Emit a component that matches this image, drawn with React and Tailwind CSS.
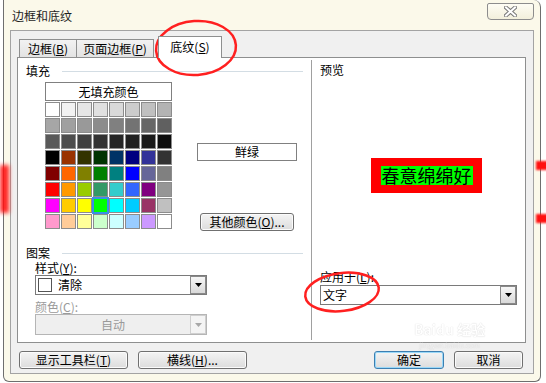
import React from 'react';

const PALETTE = [
  ['#ffffff', '#f2f2f2', '#e6e6e6', '#e0e0e0', '#d9d9d9', '#cccccc', '#c0c0c0', '#b3b3b3'],
  ['#a6a6a6', '#a0a0a0', '#999999', '#8c8c8c', '#808080', '#737373', '#666666', '#606060'],
  ['#595959', '#4d4d4d', '#404040', '#333333', '#262626', '#202020', '#1a1a1a', '#0d0d0d'],
  ['#000000', '#993300', '#333300', '#003300', '#003366', '#000080', '#333399', '#333333'],
  ['#800000', '#ff6600', '#808000', '#008000', '#008080', '#0000ff', '#666699', '#808080'],
  ['#ff0000', '#ff9900', '#99cc00', '#339966', '#33cccc', '#3366ff', '#800080', '#969696'],
  ['#ff00ff', '#ffcc00', '#ffff00', '#00ff00', '#00ffff', '#00ccff', '#993366', '#c0c0c0'],
  ['#ff99cc', '#ffcc99', '#ffff99', '#ccffcc', '#ccffff', '#99ccff', '#cc99ff', '#ffffff'],
];

const Acc = ({ c }) => <span className="underline underline-offset-1">{c}</span>;

const Arrow = ({ disabled }) => (
  <div
    className={
      disabled
        ? 'w-[16px] h-full flex items-center justify-center border border-[#cfcfcf] bg-[#f4f4f4]'
        : 'w-[16px] h-full flex items-center justify-center border border-[#8a8a8a] bg-gradient-to-b from-[#f6f6f6] to-[#d9d9d9]'
    }
  >
    <svg width="7" height="4" viewBox="0 0 7 4">
      <path d="M0 0h7L3.5 4z" fill={disabled ? '#a8a8a8' : '#000'} />
    </svg>
  </div>
);

const Button = ({ className, children, primary }) => (
  <div
    className={
      primary
        ? `h-[18px] flex items-center justify-center rounded-[3px] border border-[#3c7fb1] bg-gradient-to-b from-[#f4f4f4] to-[#dcdcdc] shadow-[inset_0_0_0_1px_#9ad8f8] ${className}`
        : `h-[18px] flex items-center justify-center rounded-[3px] border border-[#707070] bg-gradient-to-b from-[#f4f4f4] to-[#dcdcdc] shadow-[inset_0_0_0_1px_#fbfbfb] ${className}`
    }
  >
    {children}
  </div>
);

const Section = ({ title, className }) => (
  <div className={`flex items-center h-[14px] pl-[8px] pr-[8px] ${className}`}>
    <span>{title}</span>
    <div className="flex-1 h-px bg-[#d3dde4] ml-[12px]" />
  </div>
);

export default function App() {
  return (
    <div className="relative w-[546px] h-[383px] overflow-hidden bg-white pl-[3px] text-[12px] leading-[14px] text-black [font-family:'Noto_Sans_CJK_SC','Noto_Sans',sans-serif]">
      {/* window */}
      <div className="w-[538px] h-[382px] flex flex-col border-l border-r border-b border-[#6e6e6e] rounded-tr-[7px] rounded-b-[6px] bg-[#fbf9ea]">
        {/* title bar */}
        <div className="h-[30px] flex items-start justify-between pl-[8px] pr-[6px]">
          <span className="mt-[9px] text-[#1e1e1e]">边框和底纹</span>
          <div className="mt-[3px] w-[47px] h-[17px] rounded-b-[4px] rounded-t-[2px] border border-[#8d8d8d] bg-gradient-to-b from-[#fefdf4] to-[#f3f0dc] flex items-center justify-center">
            <svg width="13" height="11" viewBox="0 0 13 11">
              <path d="M2 1.5L11 9.5M11 1.5L2 9.5" stroke="#7a7a7a" strokeWidth="4" strokeLinecap="square" />
              <path d="M2 1.5L11 9.5M11 1.5L2 9.5" stroke="#ffffff" strokeWidth="2" strokeLinecap="square" />
            </svg>
          </div>
        </div>

        {/* dialog body */}
        <div className="mx-[6px] h-[344px] flex flex-col border border-[#a3a3a3] bg-[#f0f0f0] pl-[6px] pr-[7px] pt-[5px]">
          {/* tabs */}
          <div className="flex items-end h-[21px] ml-[2px]">
            <div className="w-[58px] h-[18px] flex items-center justify-center border border-b-0 border-[#8e8f8f] bg-gradient-to-b from-[#f2f2f2] to-[#e3e3e3]">
              边框(<Acc c="B" />)
            </div>
            <div className="w-[77px] h-[18px] flex items-center justify-center border border-l-0 border-b-0 border-[#8e8f8f] bg-gradient-to-b from-[#f2f2f2] to-[#e3e3e3]">
              页面边框(<Acc c="P" />)
            </div>
            <div className="relative z-10 ml-[4px] -mb-px w-[64px] h-[22px] flex items-center justify-center pb-[2px] border border-b-0 border-[#8e8f8f] bg-white">
              底纹(<Acc c="S" />)
            </div>
          </div>

          {/* tab panel */}
          <div className="h-[286px] flex border border-[#8e8f8f] bg-white">
            {/* left column */}
            <div className="w-[293px] flex flex-col">
              <Section title="填充" className="mt-[6px]" />
              <div className="flex mt-[4px] pl-[27px]">
                <div className="flex flex-col">
                  <div className="w-[127px] h-[19px] mb-px flex items-center justify-center border border-[#808080] bg-white">
                    无填充颜色
                  </div>
                  <div className="grid grid-cols-8 gap-px">
                    {PALETTE.flat().map((c, i) =>
                      i === 51 ? (
                        <div
                          key={i}
                          className="w-[15px] h-[15px] border border-[#3a8ee6] outline outline-1 outline-[#3a8ee6]"
                          style={{ backgroundColor: c }}
                        />
                      ) : (
                        <div key={i} className="w-[15px] h-[15px] border border-[#8c8c8c]" style={{ backgroundColor: c }} />
                      )
                    )}
                  </div>
                </div>
                <div className="flex flex-col pt-[61px] ml-[25px]">
                  <div className="w-[100px] h-[18px] flex items-center justify-center border border-[#808080] bg-white">
                    鲜绿
                  </div>
                  <Button className="mt-[52px] ml-[3px] w-[94px]">
                    其他颜色(<Acc c="O" />)...
                  </Button>
                </div>
              </div>

              <Section title="图案" className="mt-[15px]" />
              <div className="flex flex-col pl-[17px]">
                <span className="mt-px h-[14px]">
                  样式(<Acc c="Y" />):
                </span>
                <div className="w-[172px] h-[20px] flex items-stretch border border-[#7a7a7a] bg-white">
                  <div className="flex-1 flex items-center pl-[2px]">
                    <div className="w-[14px] h-[14px] border border-[#555]" />
                    <span className="ml-[6px]">清除</span>
                  </div>
                  <Arrow />
                </div>
                <span className="mt-[5px] h-[14px] text-[#9a9a9a]">
                  颜色(<Acc c="C" />):
                </span>
                <div className="w-[172px] h-[21px] flex items-stretch border border-[#b5b5b5] bg-[#efefef]">
                  <div className="flex-1 flex items-center justify-center text-[#9a9a9a]">自动</div>
                  <Arrow disabled />
                </div>
              </div>
            </div>

            {/* right column */}
            <div className="flex-1 flex flex-col border-l border-[#a0a0a0] my-[2px] pl-[8px]">
              <span className="mt-[3px] h-[14px]">预览</span>
              <div className="mt-[81px] ml-[51px] w-[111px] h-[35px] flex items-center justify-center bg-[#ff0000]">
                <div className="h-[19px] px-[1px] flex items-center bg-[#00ff00] text-[18px] leading-[19px]">
                  春意绵绵好
                </div>
              </div>
              <span className="mt-[77px] h-[14px]">
                应用于(<Acc c="L" />):
              </span>
              <div className="mt-px w-[197px] h-[20px] flex items-stretch border border-[#7a7a7a] bg-white">
                <div className="flex-1 flex items-center pl-[2px]">文字</div>
                <Arrow />
              </div>
            </div>
          </div>

          {/* buttons */}
          <div className="flex mt-[8px] ml-[2px] mr-[3px]">
            <Button className="w-[109px]">
              显示工具栏(<Acc c="T" />)
            </Button>
            <Button className="w-[109px] ml-[10px]">
              横线(<Acc c="H" />)...
            </Button>
            <div className="flex-1" />
            <Button primary className="w-[70px]">确定</Button>
            <Button className="w-[69px] ml-[10px]">取消</Button>
          </div>
        </div>
      </div>

      {/* blurred page content showing through the frame */}
      <div className="absolute left-0 top-[165px] w-[9px] h-[48px] bg-[#ff1010] blur-[2px] opacity-90" />
      <div className="absolute left-[536px] top-[161px] w-[12px] h-[9px] bg-[#ff1010] blur-[1px]" />
      <div className="absolute left-[536px] top-[214px] w-[12px] h-[9px] bg-[#ff1010] blur-[1px]" />

      {/* watermark */}
      <div className="absolute left-[414px] top-[322px] flex flex-col items-center gap-[5px] pointer-events-none opacity-40">
        <span className="text-[14px] leading-[15px] font-bold text-white [text-shadow:0_0_1px_#777]">Baidu 经验</span>
        <span className="text-[7px] leading-[7px] text-white [text-shadow:0_0_1px_#777]">jingyan.baidu.com</span>
      </div>

      {/* red annotation ellipses */}
      <svg className="absolute inset-0 pointer-events-none" width="546" height="383">
        <ellipse cx="196" cy="48" rx="40" ry="27" fill="none" stroke="#ff2020" strokeWidth="2.5" transform="rotate(-4 196 48)" />
        <ellipse cx="342" cy="292" rx="37" ry="19" fill="none" stroke="#ff2020" strokeWidth="2.5" transform="rotate(-7 342 292)" />
      </svg>
    </div>
  );
}
